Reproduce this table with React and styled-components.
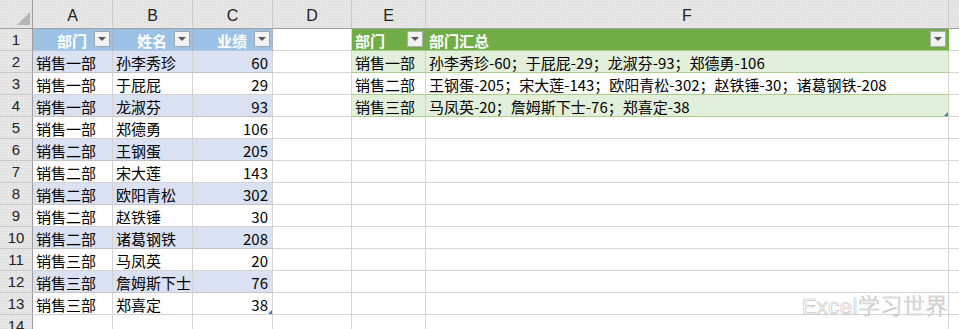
import styled, { createGlobalStyle } from "styled-components";

const GlobalStyle = createGlobalStyle`
   html, body {
      margin: 0;
      padding: 0;
      background: #fff;
      overflow: hidden;
   }
   * { box-sizing: border-box; }
`

const COLS = ["A", "B", "C", "D", "E", "F", "G"]

const sales = [
   ["销售一部", "孙李秀珍", 60],
   ["销售一部", "于屁屁", 29],
   ["销售一部", "龙淑芬", 93],
   ["销售一部", "郑德勇", 106],
   ["销售二部", "王钢蛋", 205],
   ["销售二部", "宋大莲", 143],
   ["销售二部", "欧阳青松", 302],
   ["销售二部", "赵铁锤", 30],
   ["销售二部", "诸葛钢铁", 208],
   ["销售三部", "马凤英", 20],
   ["销售三部", "詹姆斯下士", 76],
   ["销售三部", "郑喜定", 38],
]

const summary = [
   ["销售一部", "孙李秀珍-60；于屁屁-29；龙淑芬-93；郑德勇-106"],
   ["销售二部", "王钢蛋-205；宋大莲-143；欧阳青松-302；赵铁锤-30；诸葛钢铁-208"],
   ["销售三部", "马凤英-20；詹姆斯下士-76；郑喜定-38"],
]

// builds the cell list for one sheet row
const cellsFor = (r) => {
   const cells = COLS.map(() => ({ text: "", tone: "plain" }))
   const i = r - 2

   if (r === 1) {
      cells[0] = { text: "部门", tone: "blueHead", filter: true, align: "center" }
      cells[1] = { text: "姓名", tone: "blueHead", filter: true, align: "center" }
      cells[2] = { text: "业绩", tone: "blueHead", filter: true, align: "center" }
      cells[4] = { text: "部门", tone: "greenHead", filter: true }
      cells[5] = { text: "部门汇总", tone: "greenHead", filter: true }
   } else if (sales[i]) {
      const band = i % 2 === 0 ? "blueBand" : "plain"
      cells[0] = { text: sales[i][0], tone: band }
      cells[1] = { text: sales[i][1], tone: band }
      cells[2] = { text: sales[i][2], tone: band, align: "right", handle: i === sales.length - 1 }
   }

   if (r >= 2 && summary[i]) {
      const band = i % 2 === 0 ? "greenBand" : "greenPlain"
      cells[4] = { text: summary[i][0], tone: band }
      cells[5] = { text: summary[i][1], tone: band, handle: i === summary.length - 1 }
   }
   return cells
}

const App = () => {
   const rows = Array.from({ length: 14 }, (_, k) => k + 1)

   return (
      <>
         <GlobalStyle />
         <Sheet>
            <Corner><CornerMark /></Corner>
            {COLS.map(c => <ColHead key={c}>{c === "G" ? "" : c}</ColHead>)}

            {rows.map(r => (
               <Row key={r} r={r} />
            ))}
         </Sheet>
         <Watermark>Excel学习世界</Watermark>
      </>
   )
}

const Row = ({ r }) => (
   <>
      <RowHead>{r}</RowHead>
      {cellsFor(r).map((c, j) => (
         <Cell key={`${r}-${j}`} $tone={c.tone} $align={c.align} $handle={c.handle}>
            <span>{c.text}</span>
            {c.filter && <FilterBtn $tone={c.tone} />}
         </Cell>
      ))}
   </>
)

// styles
const Sheet = styled.div`
   display: grid;
   grid-template-columns: 33px 80px 80px 80px 79px 74px 523px 80px;
   grid-auto-rows: 22px;
   grid-template-rows: 29px;
   width: 959px;
   height: 329px;
   overflow: hidden;
   font-family: "Noto Sans CJK SC", "Noto Sans", sans-serif;
   font-size: 15px;
   color: #000;
`

const headBg = `
   background-color: #e6e6e6;
   background-image: radial-gradient(#d6d6d6 0.6px, transparent 0.8px);
   background-size: 3px 3px;
`

const Corner = styled.div`
   ${headBg}
   position: relative;
   border-right: 1px solid #9e9e9e;
   border-bottom: 1px solid #9e9e9e;
`

const CornerMark = styled.div`
   position: absolute;
   right: 2px;
   bottom: 3px;
   width: 0;
   height: 0;
   border-left: 13px solid transparent;
   border-bottom: 13px solid #b5b5b5;
`

const ColHead = styled.div`
   ${headBg}
   display: flex;
   align-items: center;
   justify-content: center;
   padding-top: 4px;
   font-family: "Liberation Sans", sans-serif;
   font-size: 16px;
   color: #222;
   border-right: 1px solid #c8c8c8;
   border-bottom: 1px solid #9e9e9e;
`

const RowHead = styled.div`
   ${headBg}
   display: flex;
   align-items: center;
   justify-content: center;
   font-family: "Liberation Sans", sans-serif;
   font-size: 15px;
   color: #222;
   border-right: 1px solid #9e9e9e;
   border-bottom: 1px solid #c8c8c8;
`

const tones = {
   plain: "background: #fff; border-bottom-color: #d4d4d4;",
   blueHead: "background: #9bc2e6; color: #fff; font-weight: bold; border-bottom-color: #b4c6e7; border-right-color: #a9b4c0;",
   blueBand: "background: #d9e1f2; border-bottom-color: #c4c4c4;",
   greenHead: "background: #70ad47; color: #fff; font-weight: bold; border-bottom-color: #a9d08e; border-right-color: #70ad47;",
   greenBand: "background: #e2efda; border-bottom-color: #a9d08e; border-right-color: #c6dcb8;",
   greenPlain: "background: #fff; border-bottom-color: #a9d08e;",
}

const Cell = styled.div`
   position: relative;
   display: flex;
   align-items: center;
   justify-content: ${p => p.$align === "right" ? "flex-end" : p.$align === "center" ? "center" : "flex-start"};
   padding: 0 4px 0 3px;
   white-space: nowrap;
   border-right: 1px solid #d4d4d4;
   border-bottom: 1px solid #d4d4d4;
   ${p => tones[p.$tone]}

   & > span {
      line-height: 21px;
      padding-top: 1px;
   }

   ${p => p.$handle && `
      &::after {
         content: "";
         position: absolute;
         right: 0;
         bottom: 0;
         width: 0;
         height: 0;
         border-left: 4px solid transparent;
         border-bottom: 4px solid #4472c4;
      }
   `}
`

const FilterBtn = styled.div`
   position: absolute;
   right: 2px;
   top: 2px;
   width: 16px;
   height: 16px;
   background: #f2f2f2;
   border: 1px solid ${p => p.$tone === "greenHead" ? "#b0b0b0" : "#a6a6a6"};

   &::after {
      content: "";
      position: absolute;
      left: 3px;
      top: 5px;
      border-left: 4px solid transparent;
      border-right: 4px solid transparent;
      border-top: 4px solid #555;
   }
`

const Watermark = styled.div`
   position: absolute;
   right: 11px;
   top: 288px;
   font-family: "Liberation Sans", "Noto Sans CJK SC", sans-serif;
   font-size: 22px;
   font-weight: 300;
   letter-spacing: 0.5px;
   color: #fff;
   -webkit-text-stroke: 0.6px #bdbdbd;
`

export default App;
